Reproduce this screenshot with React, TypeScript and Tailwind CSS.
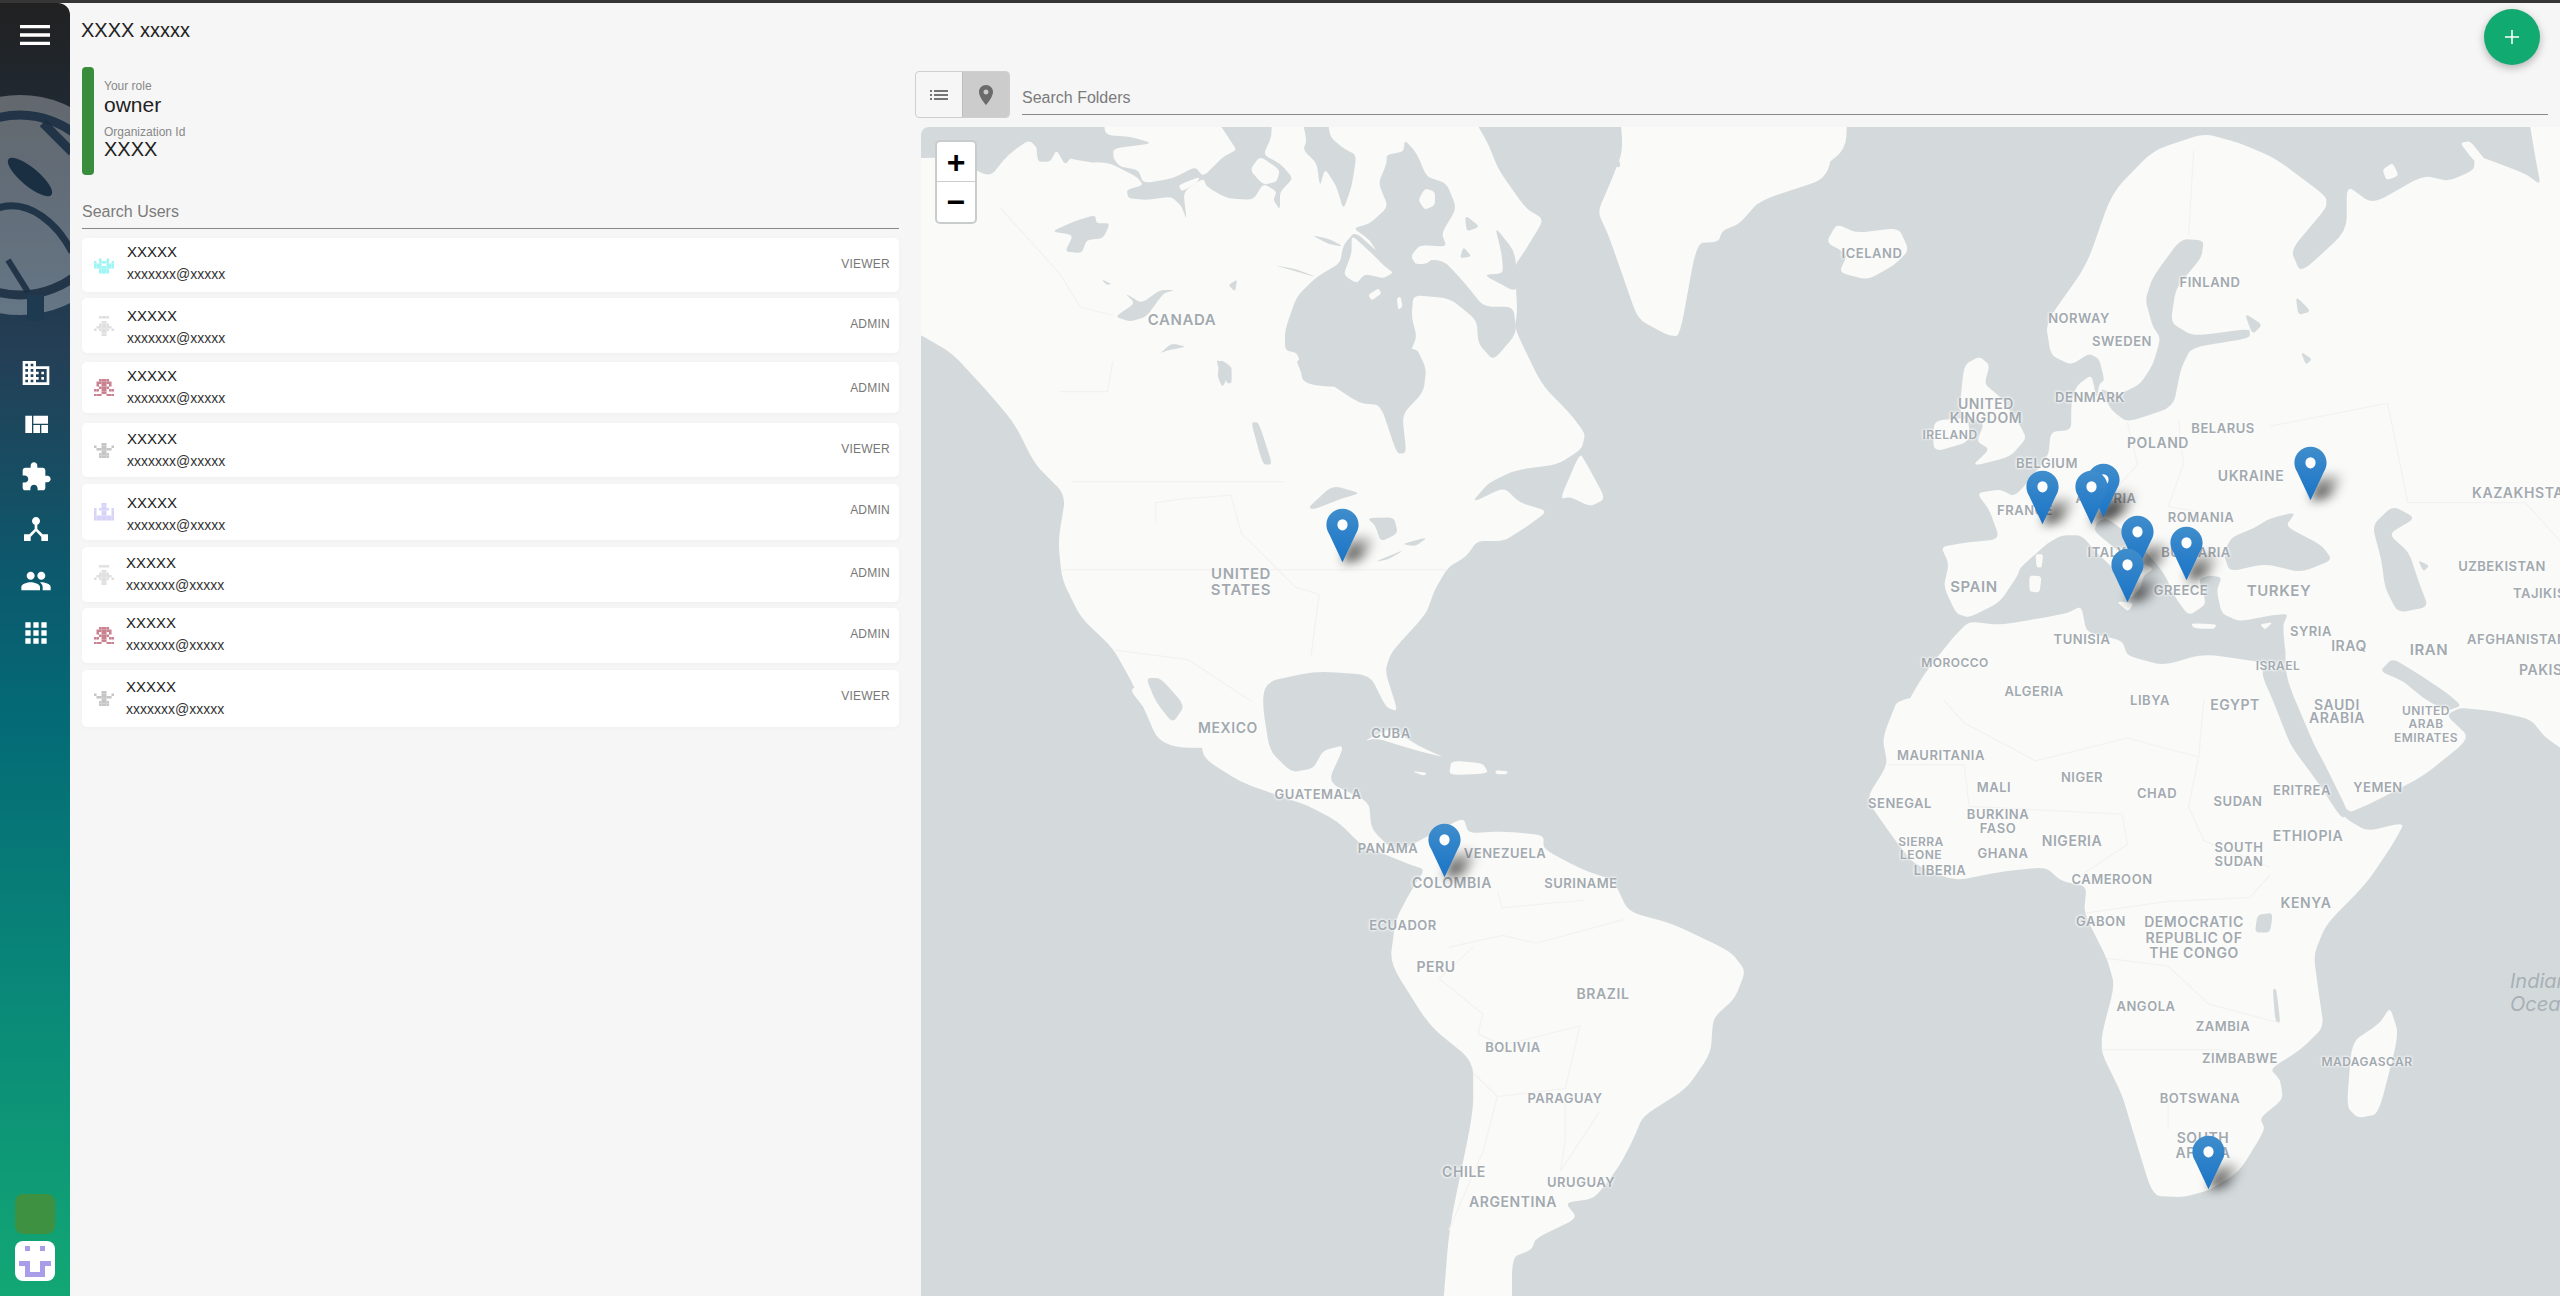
import React from "react";

const LAND = "#fafaf8";
const SEA = "#d4dadc";

const T: Record<string, string> = {
  A: "translate(920 120) scale(.5357 .3827)",
  B: "translate(1100 680) scale(.4847 .3929)",
  C: "translate(1760 120) scale(.5102 .3827)",
  D: "translate(1760 700) scale(.5102 .3801)",
  E: "translate(1050 120) scale(.3333)",
};

const smooth = (s: string) => {
  const p = s.trim().split(/\s+/).map((a) => a.split(",").map(Number));
  const n = p.length;
  const at = (a: number[], b: number[], k: number) => `${a[0] + (b[0] - a[0]) * k} ${a[1] + (b[1] - a[1]) * k}`;
  let d = "";
  for (let i = 0; i < n; i++) {
    const prev = p[(i + n - 1) % n];
    const next = p[(i + 1) % n];
    d += `${i === 0 ? "M" : "L"}${at(p[i], prev, 0.28)} Q${p[i][0]} ${p[i][1]} ${at(p[i], next, 0.28)} `;
  }
  return d + "Z";
};

const shapes: [string, string, string][] = [
  // North America
  ["A", LAND, "-40,100 60,98 130,150 165,90 205,50 235,105 252,78 275,100 340,115 345,-60 1010,-60 1060,60 1080,130 1130,230 1165,260 1130,340 1110,380 1115,500 1110,545 1160,690 1215,770 1242,820 1235,860 1190,900 1110,915 1060,950 1030,1000 1090,960 1120,1000 1172,1022 1130,1065 1090,1100 1040,1100 1020,1140 985,1170 960,1230 945,1290 880,1390 868,1440 892,1545 870,1535 840,1450 740,1440 640,1470 640,1640 450,1640 400,1480 360,1380 300,1300 265,1200 258,1100 272,980 215,900 175,790 120,700 60,610 0,560 -40,550"],
  ["A", LAND, "1195,990 1232,870 1245,900 1280,990 1250,1010 1215,985"],
  ["A", LAND, "1305,-60 1700,-60 1700,150 1568,210 1530,270 1498,290 1490,318 1450,322 1418,565 1395,562 1340,520 1310,400 1285,300 1265,240 1290,160 1312,80"],
  ["C", LAND, "-100,-40 172,-40 168,75 100,150 40,180 -20,210 -100,210"],
  // Arctic Canada
  ["E", SEA, "-40,-30 160,-30 165,45 240,50 310,70 190,85 190,115 210,140 265,150 280,190 370,175 435,140 460,170 520,110 560,90 540,60 480,-30 665,-30 665,50 640,105 690,130 730,175 690,215 690,270 670,240 680,215 640,190 610,240 530,235 470,200 460,175 400,215 410,300 395,260 365,230 290,240 235,235 230,210 280,195 260,170 180,130 120,125 70,105 45,135 20,90 0,125 -40,125"],
  ["E", LAND, "385,195 450,170 440,190 395,215"],
  ["E", LAND, "600,150 630,108 690,150 680,185 640,195"],
  ["E", SEA, "750,-30 830,-30 840,50 880,85 920,105 905,200 880,270 860,200 825,145 810,200 800,130 760,90 770,60"],
  ["E", SEA, "1010,105 1060,95 1065,60 1100,100 1130,170 1190,190 1220,265 1175,340 1190,380 1110,375 1085,405 1090,430 1050,470 1000,430 960,360 910,325 960,310 1015,260 985,190 1010,130"],
  ["E", SEA, "880,375 915,335 1000,410 1085,420 1180,420 1245,490 1300,560 1390,560 1400,640 1330,722 1285,670 1280,600 1200,535 1090,525 1085,590 1100,650 1080,700 1120,800 760,800 745,700 705,690 705,630 740,530 800,470 870,430"],
  ["E", LAND, "905,345 960,395 1005,440 1030,458 1000,475 945,462 920,490 880,465 905,400"],
  ["E", LAND, "955,525 985,505 995,520 965,542"],
  ["E", LAND, "1040,535 1052,530 1058,560 1045,570"],
  ["E", LAND, "1085,405 1110,378 1165,400 1130,432 1095,432"],
  ["E", LAND, "1105,240 1125,205 1155,215 1155,255 1125,270"],
  ["E", SEA, "1335,320 1395,395 1405,520 1300,465 1360,460 1355,400"],
  ["E", SEA, "1245,285 1290,320 1250,335"],
  ["E", SEA, "1240,380 1265,410 1230,415"],
  ["E", SEA, "5,335 70,305 135,285 140,310 180,310 160,355 110,360 95,400 45,395 70,345"],
  ["E", SEA, "195,590 255,550 225,520 275,550 330,510 375,510 340,520 290,590 240,605"],
  ["E", SEA, "330,700 365,670 410,680 350,692"],
  ["E", SEA, "535,495 562,478 555,515"],
  ["E", SEA, "155,478 185,492 170,495"],
  ["E", SEA, "670,435 740,448 800,472 740,455"],
  ["E", SEA, "785,345 840,358 880,380 835,372"],
  ["E", SEA, "500,720 520,728 505,745"],
  ["E", SEA, "520,745 545,738 545,790 530,790"],
  ["A", SEA, "700,620 925,590 945,650 940,710 900,770 908,870 890,872 860,745 820,740 750,675 715,672"],
  ["A", SEA, "618,790 632,790 658,900 640,900"],
  ["A", SEA, "560,625 582,645 565,700 555,670"],
  ["A", SEA, "725,1012 770,955 822,975 790,988 735,1018"],
  ["A", SEA, "835,1040 885,1038 892,1080 860,1102 850,1060"],
  ["A", SEA, "848,1155 905,1122 875,1148"],
  ["A", SEA, "900,1108 948,1090 925,1114"],
  ["A", SEA, "1255,60 1285,35 1312,130 1262,100"],
  // Central & South America
  ["B", LAND, "125,-60 170,65 205,140 215,200 290,260 370,295 430,320 490,360 540,420 600,450 640,470 670,482 640,540 610,610 598,720 680,880 770,970 770,1100 720,1400 705,1640 850,1640 850,1470 890,1450 900,1420 985,1370 960,1330 1020,1320 1070,1240 1100,1170 1120,1110 1210,1040 1260,950 1265,860 1310,810 1332,740 1300,690 1180,620 1090,590 1060,510 990,480 915,430 915,395 830,385 760,390 750,350 680,395 610,440 560,380 555,310 470,260 505,165 460,180 440,225 395,235 350,180 335,60 345,-60"],
  ["B", LAND, "62,25 92,5 120,75 150,135 120,115 90,70"],
  ["B", SEA, "95,-5 125,-5 175,65 150,110 115,55"],
  ["B", LAND, "545,155 600,122 660,170 712,198 650,178 570,148"],
  ["B", LAND, "725,205 790,212 802,238 720,242"],
  ["B", LAND, "643,232 675,236 668,244"],
  ["B", LAND, "815,230 842,232 838,240 818,240"],
  // Eurasia
  ["C", LAND, "1500,-60 1650,-60 1650,1450 1150,1450 1030,1400 1025,1320 1035,1290 1000,1295 940,1310 905,1290 895,1230 905,1195 880,1190 860,1200 875,1265 840,1295 815,1250 790,1180 735,1095 680,1040 660,1050 655,1075 715,1140 772,1172 752,1190 745,1225 725,1252 718,1205 660,1130 630,1085 590,1085 560,1110 510,1170 505,1190 470,1260 410,1300 385,1290 360,1220 370,1160 355,1115 400,1105 470,1095 450,1020 425,975 470,965 500,985 565,880 570,815 610,810 610,740 620,695 650,665 660,730 665,690 675,680 665,625 645,610 610,640 570,615 560,530 640,380 690,190 770,80 870,35 940,60 1010,100 1110,200 1110,230 1040,340 1060,400 1150,290 1150,170 1200,220 1300,145 1350,160 1400,130 1400,90 1500,140 1530,170 1520,100"],
  ["C", SEA, "665,700 690,760 720,790 810,750 825,650 845,595 960,570 960,545 850,565 805,530 815,440 865,360 870,315 825,310 770,410 755,470 770,540 785,570 770,640 745,690 700,720"],
  ["C", SEA, "925,1090 970,1065 1000,1040 1050,1025 1030,1062 1100,1110 1122,1150 1060,1182 990,1160 920,1180 908,1130"],
  ["C", SEA, "1240,1008 1285,1040 1232,1082 1272,1130 1292,1210 1310,1272 1250,1288 1225,1222 1218,1150 1200,1060"],
  ["C", SEA, "1290,1150 1312,1165 1300,1180"],
  ["C", SEA, "950,505 985,535 965,560"],
  ["C", SEA, "1050,460 1080,500 1055,510"],
  ["C", SEA, "1060,605 1082,625 1070,640"],
  ["C", LAND, "130,320 150,272 190,295 272,282 292,340 262,380 210,418 155,398 172,350"],
  ["C", LAND, "430,618 450,640 440,690 470,722 510,798 522,832 490,880 415,905 450,860 425,840 440,790 390,770 400,640"],
  ["C", LAND, "340,785 408,778 412,840 340,868"],
  ["C", LAND, "698,1258 732,1262 722,1285"],
  ["C", LAND, "528,1190 552,1192 548,1235 528,1232"],
  ["C", LAND, "540,1135 555,1135 552,1170 542,1168"],
  ["C", LAND, "845,1315 895,1318 890,1330 850,1328"],
  ["C", LAND, "980,1318 1005,1312 990,1332"],
  ["C", LAND, "1372,60 1392,55 1425,110 1400,108"],
  ["C", LAND, "1220,130 1240,112 1252,145 1228,158"],
  // Africa / Arabia
  ["C", LAND, "410,1310 470,1320 600,1290 630,1270 640,1340 710,1360 720,1400 790,1425 870,1395 1000,1420 1030,1500 1060,1640 250,1640 270,1568 320,1450 380,1350"],
  ["D", LAND, "275,-20 240,100 250,170 208,260 260,360 300,430 380,476 480,450 560,440 590,476 640,490 635,560 680,680 695,750 670,880 670,930 710,1040 730,1130 770,1305 830,1308 880,1290 940,1240 990,1130 980,1100 1025,1050 1020,1000 1000,970 1060,920 1105,860 1095,770 1085,670 1110,590 1190,480 1240,380 1264,322 1190,345 1145,310 1090,200 1040,120 1000,-20"],
  ["D", LAND, "1030,-60 1090,130 1150,300 1200,270 1300,200 1392,100 1345,40 1372,20 1440,30 1510,50 1540,100 1640,190 1640,-220 1030,-190"],
  ["D", SEA, "985,-110 1035,-30 1060,60 1100,150 1155,300 1140,312 1090,210 1040,120 1005,0 985,-60"],
  ["D", SEA, "1215,-76 1260,-50 1300,-5 1345,30 1375,15 1345,-20 1300,-60 1240,-110"],
  ["D", LAND, "1235,808 1252,880 1212,1090 1172,1100 1150,1070 1160,900 1215,850"],
  ["D", SEA, "975,565 1005,560 1000,612 970,612"],
  ["D", SEA, "1005,760 1012,760 1020,850 1010,845"],
];

const borders: [string, string][] = [
  ["A", "285,945 680,945"],
  ["A", "265,1175 985,1175"],
  ["A", "440,1050 440,1000 490,990 580,980 600,1080 700,1220 745,1240 730,1400"],
  ["A", "365,1385 500,1410 620,1520"],
  ["A", "150,230 260,400 300,490 360,510"],
  ["A", "360,630 350,710 260,710"],
  ["B", "720,680 830,650 900,670 1080,610"],
  ["B", "770,680 700,760 790,850 780,900 830,930 990,880 960,1040 820,1060"],
  ["B", "770,1000 820,1060 790,1200 720,1400"],
  ["B", "960,1060 960,1170 950,1250 1030,1100"],
  ["B", "820,540 830,580 1000,560"],
  ["C", "720,790 740,900 700,960"],
  ["C", "820,780 830,900 800,1010 930,1040"],
  ["C", "1000,800 1230,740 1270,1000"],
  ["C", "1270,1000 1500,1000 1568,1100"],
  ["C", "850,80 840,300"],
  ["D", "360,0 400,60 540,160 720,100 860,150 870,0"],
  ["D", "860,150 840,280 870,370 1000,440"],
  ["D", "250,170 400,170 410,280 560,290 710,300 720,380 630,460"],
  ["D", "640,560 800,530 960,520 1000,460"],
  ["D", "680,680 800,700 880,800 1020,850"],
  ["D", "670,920 820,920 900,920 1010,960"],
  ["D", "800,1040 800,1130"],
];

type L = [string, number, number, number?, boolean?];
const labels: L[] = [
  ["CANADA", 1182, 319, 15], ["UNITED", 1241, 573, 15], ["STATES", 1241, 589, 15],
  ["MEXICO", 1228, 728, 14], ["CUBA", 1391, 733, 13], ["GUATEMALA", 1318, 794, 13],
  ["PANAMA", 1388, 848, 13], ["VENEZUELA", 1505, 853, 13], ["COLOMBIA", 1452, 883, 14],
  ["SURINAME", 1581, 883, 13], ["ECUADOR", 1403, 925, 13], ["PERU", 1436, 967, 14],
  ["BRAZIL", 1603, 994, 14], ["BOLIVIA", 1513, 1047, 13], ["PARAGUAY", 1565, 1098, 13],
  ["CHILE", 1464, 1172, 14], ["URUGUAY", 1581, 1182, 13], ["ARGENTINA", 1513, 1202, 14],
  ["ICELAND", 1872, 253, 13], ["FINLAND", 2210, 282, 13], ["NORWAY", 2079, 318, 13],
  ["SWEDEN", 2122, 341, 13], ["DENMARK", 2090, 397, 13], ["UNITED", 1986, 404, 14],
  ["KINGDOM", 1986, 418, 14], ["IRELAND", 1950, 435, 12], ["BELARUS", 2223, 428, 13],
  ["POLAND", 2158, 443, 14], ["BELGIUM", 2047, 463, 13], ["UKRAINE", 2251, 476, 14],
  ["KAZAKHSTAN", 2472, 493, 14, true], ["AUSTRIA", 2106, 498, 13], ["FRANCE", 2025, 510, 13],
  ["ROMANIA", 2201, 517, 13], ["ITALY", 2107, 552, 13], ["BULGARIA", 2196, 552, 13],
  ["SPAIN", 1974, 586, 15], ["GREECE", 2181, 590, 13], ["TURKEY", 2279, 590, 15],
  ["UZBEKISTAN", 2502, 566, 13], ["TAJIKISTAN", 2513, 593, 13, true], ["SYRIA", 2311, 631, 13],
  ["IRAQ", 2349, 646, 14], ["IRAN", 2429, 649, 15], ["AFGHANISTAN", 2467, 639, 13, true],
  ["TUNISIA", 2082, 639, 13], ["MOROCCO", 1955, 663, 12], ["ISRAEL", 2278, 666, 12],
  ["PAKISTAN", 2519, 670, 14, true], ["ALGERIA", 2034, 691, 13], ["LIBYA", 2150, 700, 13],
  ["EGYPT", 2235, 705, 14], ["SAUDI", 2337, 705, 14], ["ARABIA", 2337, 718, 14],
  ["UNITED", 2426, 711, 12], ["ARAB", 2426, 724, 12], ["EMIRATES", 2426, 738, 12],
  ["MAURITANIA", 1941, 755, 13], ["NIGER", 2082, 777, 13], ["MALI", 1994, 787, 13],
  ["CHAD", 2157, 793, 13], ["SENEGAL", 1900, 803, 13], ["SUDAN", 2238, 801, 13],
  ["ERITREA", 2302, 790, 13], ["YEMEN", 2378, 787, 13], ["BURKINA", 1998, 814, 13],
  ["FASO", 1998, 828, 13], ["ETHIOPIA", 2308, 836, 14], ["NIGERIA", 2072, 841, 14],
  ["SOUTH", 2239, 847, 13], ["SUDAN", 2239, 861, 13], ["SIERRA", 1921, 842, 12],
  ["LEONE", 1921, 855, 12], ["GHANA", 2003, 853, 13], ["LIBERIA", 1940, 870, 13],
  ["CAMEROON", 2112, 879, 13], ["KENYA", 2306, 903, 14], ["GABON", 2101, 921, 13],
  ["DEMOCRATIC", 2194, 922, 14], ["REPUBLIC OF", 2194, 938, 14], ["THE CONGO", 2194, 953, 14],
  ["ANGOLA", 2146, 1006, 13], ["ZAMBIA", 2223, 1026, 13], ["ZIMBABWE", 2240, 1058, 13],
  ["MADAGASCAR", 2367, 1062, 12], ["BOTSWANA", 2200, 1098, 13], ["SOUTH", 2203, 1138, 14],
  ["AFRICA", 2203, 1153, 14],
];

const pins: [number, number][] = [
  [2103, 518], [2042, 525], [2091, 525], [1342, 563], [2137, 570], [2186, 581], [2127, 603], [2310, 501], [1444, 878], [2208, 1190],
];

const Pin = ({ x, y, shadow }: { x: number; y: number; shadow?: boolean }) => (
  <svg
    viewBox="0 0 25 41"
    className="absolute w-[35px] h-[55px] overflow-visible"
    style={{ left: x - 921 - 17.5, top: y - 127 - 55 }}
  >
    <defs>
      <linearGradient id="pinfill" x1="0" y1="0" x2="0" y2="1">
        <stop offset="0" stopColor="#3f8dcc" />
        <stop offset="1" stopColor="#1a74c6" />
      </linearGradient>
      <linearGradient id="pinshade" x1="0" y1="1" x2="1" y2="0">
        <stop offset="0.2" stopColor="#000" stopOpacity="0.7" />
        <stop offset="1" stopColor="#000" stopOpacity="0" />
      </linearGradient>
    </defs>
    {shadow ? (
      <path d="M12.5 41 L18 24 L30 20 L37 24 L27 38Z" fill="url(#pinshade)" className="blur-[4px]" />
    ) : (
      <>
        <path
          d="M12.5 0.5C5.9 0.5 0.5 5.9 0.5 12.5c0 2.4.7 4.6 1.9 6.5L12.5 40.5l10.1-21.5c1.2-1.9 1.9-4.1 1.9-6.5C24.5 5.9 19.1.5 12.5.5z"
          fill="url(#pinfill)"
        />
        <ellipse cx="12.5" cy="12.5" rx="3.8" ry="4.2" fill="#fdfdfd" />
      </>
    )}
  </svg>
);

const art: Record<string, [string, string[]]> = {
  cyan: ["#a2f5f5", ["........", "..x..x..", "x.xxxx.x", "xxx..xxx", "xxxxxxxx", "..xxxx..", "..xxxx.."]],
  light: ["#e0e0e0", ["..xxxx..", "........", "...xx...", "..xxxx..", ".xxxxxx.", "x.xxxx.x", "...xx...", "...xx..."]],
  red: ["#c9828f", ["..xxxx..", ".xxxxxx.", ".x.xx.x.", "..xxxx..", "xx.xx.xx", "...xx...", "xxx..xxx"]],
  gray: ["#c6c6c6", ["...xx...", "x..xx..x", ".xxxxxx.", "...xx...", "..xxxx..", "..xxxx.."]],
  lav: ["#d8d4f7", ["...xx...", "...xx...", "x.xxxx.x", "x..xx..x", "x..xx..x", "xxxxxxxx", "xxxxxxxx"]],
};

const Avatar = ({ kind }: { kind: string }) => {
  const [color, rows] = art[kind];
  return (
    <svg viewBox={`0 0 8 ${rows.length}`} className="block w-5" style={{ height: rows.length * 2.5 }}>
      {rows.flatMap((r, y) =>
        r.split("").map((c, x) => (c === "x" ? <rect key={`${x}-${y}`} x={x} y={y} width="1.02" height="1.02" fill={color} /> : null))
      )}
    </svg>
  );
};

const users = [
  { kind: "cyan", role: "VIEWER", row: "h-[54px] mt-[9px]", text: "pt-[5px] ml-[13px]" },
  { kind: "light", role: "ADMIN", row: "h-[55px] mt-[6px]", text: "pt-[9px] ml-[13px]" },
  { kind: "red", role: "ADMIN", row: "h-[51px] mt-[9px]", text: "pt-[5px] ml-[13px]" },
  { kind: "gray", role: "VIEWER", row: "h-[54px] mt-[10px]", text: "pt-[7px] ml-[13px]" },
  { kind: "lav", role: "ADMIN", row: "h-[56px] mt-[7px]", text: "pt-[10px] ml-[13px]" },
  { kind: "light", role: "ADMIN", row: "h-[55px] mt-[7px]", text: "pt-[7px] ml-[12px]" },
  { kind: "red", role: "ADMIN", row: "h-[55px] mt-[6px]", text: "pt-[6px] ml-[12px]" },
  { kind: "gray", role: "VIEWER", row: "h-[57px] mt-[7px]", text: "pt-[8px] ml-[12px]" },
];

const navIcons = [
  "M12 7V3H2v18h20V7H12zM6 19H4v-2h2v2zm0-4H4v-2h2v2zm0-4H4V9h2v2zm0-4H4V5h2v2zm4 12H8v-2h2v2zm0-4H8v-2h2v2zm0-4H8V9h2v2zm0-4H8V5h2v2zm10 12h-8v-2h2v-2h-2v-2h2v-2h-2V9h8v10zm-2-8h-2v2h2v-2zm0 4h-2v2h2v-2z",
  "M10 18h5v-6h-5v6zm-6 0h5V5H4v13zm12 0h5v-6h-5v6zM10 5v6h11V5H10z",
  "M20.5 11H19V7c0-1.1-.9-2-2-2h-4V3.5C13 2.12 11.88 1 10.5 1S8 2.12 8 3.5V5H4c-1.1 0-1.99.9-1.99 2v3.8H3.5c1.49 0 2.7 1.21 2.7 2.7s-1.21 2.7-2.7 2.7H2V20c0 1.1.9 2 2 2h3.8v-1.5c0-1.49 1.21-2.7 2.7-2.7 1.49 0 2.7 1.21 2.7 2.7V22H17c1.1 0 2-.9 2-2v-4h1.5c1.38 0 2.5-1.12 2.5-2.5S21.88 11 20.5 11z",
  "M17 16l-4-4V8.82C14.16 8.4 15 7.3 15 6c0-1.66-1.34-3-3-3S9 4.34 9 6c0 1.3.84 2.4 2 2.82V12l-4 4H3v5h5v-3.05l4-4.2 4 4.2V21h5v-5h-4z",
  "M16 11c1.66 0 2.99-1.34 2.99-3S17.66 5 16 5c-1.66 0-3 1.34-3 3s1.34 3 3 3zm-8 0c1.66 0 2.99-1.34 2.99-3S9.66 5 8 5C6.34 5 5 6.34 5 8s1.34 3 3 3zm0 2c-2.33 0-7 1.17-7 3.5V19h14v-2.5c0-2.33-4.67-3.5-7-3.5zm8 0c-.29 0-.62.02-.97.05 1.16.84 1.97 1.97 1.97 3.45V19h6v-2.5c0-2.33-4.67-3.5-7-3.5z",
  "M4 8h4V4H4v4zm6 12h4v-4h-4v4zm-6 0h4v-4H4v4zm0-6h4v-4H4v4zm6 0h4v-4h-4v4zm6-10v4h4V4h-4zm-6 4h4V4h-4v4zm6 6h4v-4h-4v4zm0 6h4v-4h-4v4z",
];

const Sidebar = () => (
  <aside className="relative w-[70px] shrink-0 flex flex-col items-center overflow-hidden rounded-tr-xl bg-[linear-gradient(180deg,#212121_0%,#1f2e3e_14%,#243f56_27%,#0b5a6e_45%,#046a76_55%,#0a8a78_78%,#12a774_100%)]">
    <svg viewBox="0 3 70 340" className="absolute left-0 top-0 w-[70px] h-[340px]">
      <circle cx="20" cy="205" r="110" fill="#ffffff" opacity="0.3" />
      <g fill="none" stroke="#1b2f42" strokeOpacity="0.9">
        <circle cx="20" cy="205" r="90" strokeWidth="9" />
        <path d="M43 123 L72 152" strokeWidth="9" />
        <path d="M-2 208 C30 198 58 225 72 252" strokeWidth="7" />
        <path d="M8 260 L28 292" strokeWidth="6" />
      </g>
      <ellipse cx="30" cy="177" rx="28" ry="9" transform="rotate(40 30 177)" fill="#1b2f42" />
      <rect x="27" y="295" width="17" height="26" fill="#1e3a50" />
    </svg>
    <svg viewBox="0 0 24 24" className="relative mt-[12px] w-10 h-10 fill-white">
      <path d="M3 18h18v-2H3v2zm0-5h18v-2H3v2zm0-7v2h18V6H3z" />
    </svg>
    <nav className="relative mt-[292px] pl-px flex flex-col items-center">
      {navIcons.map((d, i) => (
        <div key={i} className="h-[52px] flex items-center justify-center">
          <svg viewBox="0 0 24 24" className="w-8 h-8 fill-white">
            <path d={d} />
          </svg>
        </div>
      ))}
    </nav>
    <div className="mt-auto mb-[7px] w-10 h-10 rounded-lg bg-[#3f9142]" />
    <div className="mb-[15px] w-10 h-10 rounded-lg bg-white">
      <svg viewBox="0 0 40 40" className="w-10 h-10 fill-[#a99ce8]">
        <rect x="10" y="5" width="5" height="5" />
        <rect x="25" y="5" width="5" height="5" />
        <rect x="4" y="20" width="11" height="5" />
        <rect x="25" y="20" width="11" height="5" />
        <rect x="10" y="25" width="5" height="6" />
        <rect x="25" y="25" width="5" height="6" />
        <rect x="10" y="31" width="20" height="5" />
      </svg>
    </div>
  </aside>
);

const WorldMap = () => (
  <div className="relative flex-1 ml-[6px] mt-[9px] overflow-hidden rounded-tl-lg bg-[#d4dadc] font-[Inter,sans-serif]">
    <svg viewBox="921 127 1639 1169" className="block w-[1639px] h-[1169px]">
      {shapes.map(([t, fill, pts], i) => (
        <path key={i} transform={T[t]} d={smooth(pts)} fill={fill} />
      ))}
      {borders.map(([t, pts], i) => (
        <polyline key={i} transform={T[t]} points={pts} fill="none" stroke="#f4f2f0" strokeWidth="1.2" strokeLinejoin="round" vectorEffect="non-scaling-stroke" />
      ))}
    </svg>
    {labels.map(([text, x, y, size, left], i) => (
      <span
        key={i}
        className={`absolute whitespace-nowrap font-semibold leading-none tracking-[0.04em] text-[#a2a9af] [text-shadow:0_0_3px_#fff,0_0_3px_#fff] -translate-y-1/2 ${left ? "" : "-translate-x-1/2"}`}
        style={{ left: x - 921, top: y - 127, fontSize: size }}
      >
        {text}
      </span>
    ))}
    <span className="absolute left-[1589px] top-[843px] text-[20px] leading-[23px] italic text-[#a8b0b6]">
      Indian
      <br />
      Ocean
    </span>
    {pins.map(([x, y], i) => (
      <Pin key={`s${i}`} x={x} y={y} shadow />
    ))}
    {pins.map(([x, y], i) => (
      <Pin key={i} x={x} y={y} />
    ))}
    <div className="absolute left-[14px] top-[13px] w-[42px] rounded-[5px] border-2 border-[#c9cccc] bg-white font-[Liberation_Sans,Arial,sans-serif] font-bold text-black">
      <div className="h-[40px] flex items-center justify-center border-b border-[#ccc] text-[32px] leading-none">+</div>
      <div className="h-[40px] flex items-center justify-center text-[32px] leading-none">−</div>
    </div>
  </div>
);

export default function App() {
  return (
    <div className="relative flex h-[1296px] w-[2560px] overflow-hidden border-t-[3px] border-[#363636] bg-[#f6f6f6] font-[Liberation_Sans,Arial,sans-serif]">
      <Sidebar />
      <main className="flex-1 flex flex-col min-w-0">
        <h1 className="h-[64px] pl-[11px] pt-[16px] text-[20px] leading-[22px] font-normal text-[#222]">XXXX xxxxx</h1>
        <div className="flex flex-1 min-h-0">
          <section className="w-[817px] ml-[12px] shrink-0">
            <div className="flex h-[108px]">
              <div className="w-3 rounded bg-[#388e3c]" />
              <div className="ml-[10px] pt-[12px]">
                <div className="text-[12px] leading-[14px] text-[#888]">Your role</div>
                <div className="text-[21px] leading-[24px] text-[#222]">owner</div>
                <div className="mt-[8px] text-[12px] leading-[14px] text-[#888]">Organization Id</div>
                <div className="-mt-px text-[20px] leading-[22px] text-[#222]">XXXX</div>
              </div>
            </div>
            <div className="mt-[26px] h-[28px] pt-px border-b border-[#888] text-[16px] leading-[20px] text-[#7b7b7b]">Search Users</div>
            {users.map((u, i) => (
              <div key={i} className={`flex items-center rounded-[5px] bg-white pl-[12px] pr-[9px] shadow-[0_1px_4px_rgba(0,0,0,0.03)] ${u.row}`}>
                <Avatar kind={u.kind} />
                <div className={`self-start ${u.text}`}>
                  <div className="text-[15px] leading-[18px] text-[#222]">XXXXX</div>
                  <div className="mt-[5px] text-[14px] leading-[16px] text-[#333]">xxxxxxx@xxxxx</div>
                </div>
                <div className="ml-auto self-start mt-[19px] text-[12px] leading-[14px] tracking-[0.02em] text-[#777]">{u.role}</div>
              </div>
            ))}
          </section>
          <section className="flex-1 ml-[16px] mt-[4px] flex flex-col min-w-0">
            <div className="flex h-[47px]">
              <div className="flex w-[95px] overflow-hidden rounded border border-[#cfcfcf]">
                <div className="w-[47px] flex items-center justify-center border-r border-[#bdbdbd]">
                  <svg viewBox="0 0 24 24" className="w-6 h-6 fill-[#757575]">
                    <path d="M3 13h2v-2H3v2zm0 4h2v-2H3v2zm0-8h2V7H3v2zm4 4h14v-2H7v2zm0 4h14v-2H7v2zM7 7v2h14V7H7z" />
                  </svg>
                </div>
                <div className="flex-1 flex items-center justify-center bg-[#cccccc]">
                  <svg viewBox="0 0 24 24" className="w-6 h-6 fill-[#6b6b6b]">
                    <path d="M12 2C8.13 2 5 5.13 5 9c0 5.25 7 13 7 13s7-7.75 7-13c0-3.87-3.13-7-7-7zm0 9.5c-1.38 0-2.5-1.12-2.5-2.5s1.12-2.5 2.5-2.5 2.5 1.12 2.5 2.5-1.12 2.5-2.5 2.5z" />
                  </svg>
                </div>
              </div>
              <div className="flex-1 ml-[12px] mr-[12px] h-[44px] pt-[17px] border-b border-[#888] text-[16px] leading-[20px] text-[#7b7b7b]">Search Folders</div>
            </div>
            <WorldMap />
          </section>
        </div>
      </main>
      <button className="absolute left-[2484px] top-[6px] w-14 h-14 rounded-full bg-[#11ab72] flex items-center justify-center shadow-[0_3px_8px_rgba(0,0,0,0.28)]">
        <svg viewBox="0 0 14 14" className="w-[14px] h-[14px] stroke-white" strokeWidth="1.6">
          <path d="M7 0V14M0 7H14" />
        </svg>
      </button>
    </div>
  );
}
